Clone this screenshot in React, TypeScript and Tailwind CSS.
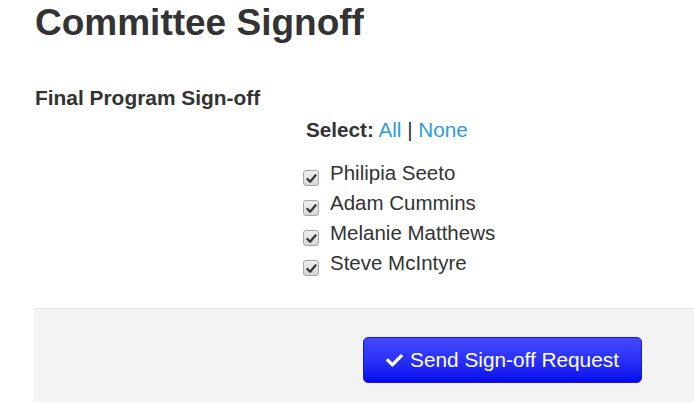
import { FaCheck } from 'react-icons/fa';

const members = ['Philipia Seeto', 'Adam Cummins', 'Melanie Matthews', 'Steve McIntyre'];

function CheckBox() {
  return (
    <span className="mt-[12px] flex h-[16px] w-[16px] shrink-0 items-center justify-center rounded-[3px] border border-[#a6a6a6] bg-gradient-to-b from-[#f0f0f0] to-[#d6d6d6]">
      <svg viewBox="0 0 12 12" className="h-[11px] w-[11px]">
        <path d="M1.5 6.5 L4.5 9.5 L10.5 2.5" fill="none" stroke="#333" strokeWidth="2.4" strokeLinecap="round" strokeLinejoin="round" />
      </svg>
    </span>
  );
}

export default function App() {
  return (
    <div className="h-[403px] w-[694px] overflow-hidden bg-white font-['Liberation_Sans',Arial,sans-serif] text-[#333]">
      {/* Heading */}
      <h1 className="pl-[35px] pt-[3px] text-[37px] font-bold leading-[40px]">Committee Signoff</h1>

      {/* Sign-off form */}
      <div className="mt-[40px] flex pl-[35px]">
        <div className="w-[268px] shrink-0 text-[20.9px] font-bold leading-[30px]">Final Program Sign-off</div>
        <div className="pt-[32px] text-[20.5px] leading-[30px]">
          <div className="pl-[3px] text-[20.7px]">
            <span className="font-bold">Select:</span>{' '}
            <a className="text-[#2d9cdb]">All</a> | <a className="text-[#2d9cdb]">None</a>
          </div>
          <ul className="mt-[13px]">
            {members.map(name => (
              <li key={name} className="flex items-start gap-[11px]">
                <CheckBox />
                <span>{name}</span>
              </li>
            ))}
          </ul>
        </div>
      </div>

      {/* Footer actions */}
      <div className="ml-[34px] mt-[30px] border-t border-[#e3e3e3] bg-[#f3f3f3] pb-[19px] pl-[329px] pt-[28px]">
        <button className="flex h-[46px] w-[279px] items-center justify-center gap-[7px] rounded-[5px] border border-[#1a1acc] bg-gradient-to-b from-[#4646ff] to-[#0505ee] text-[20.8px] text-white">
          <FaCheck className="h-[17px] w-[17px]" />
          <span>Send Sign-off Request</span>
        </button>
      </div>
    </div>
  );
}
